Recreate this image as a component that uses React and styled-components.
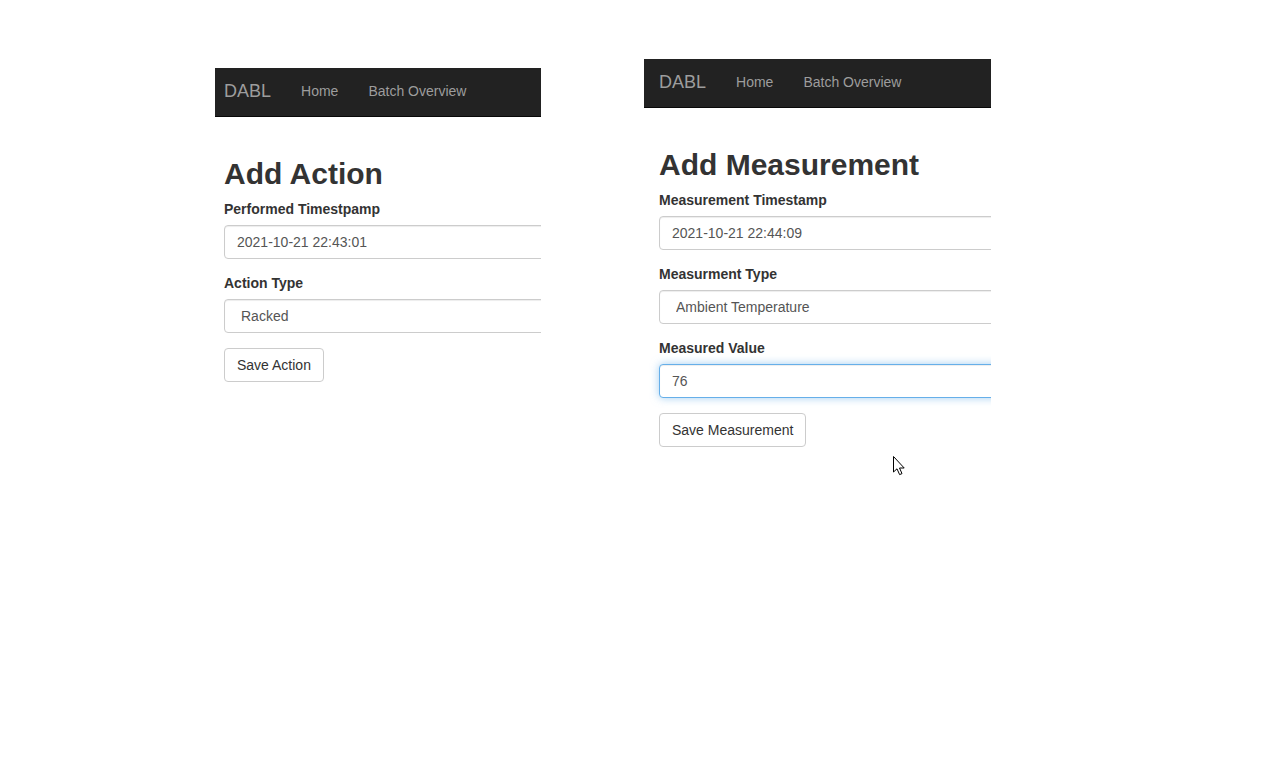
import React from 'react'
import styled, { createGlobalStyle } from 'styled-components'

const GlobalStyle = createGlobalStyle`
  html, body {
    margin: 0;
    padding: 0;
    background: #fff;
  }
  body {
    font-family: "Liberation Sans", Arial, sans-serif;
    font-size: 14px;
    line-height: 1.42857;
    color: #333;
  }
  * {
    box-sizing: border-box;
  }
`

const Canvas = styled.div`
  position: relative;
  width: 1268px;
  height: 770px;
  display: flex;
  align-items: flex-start;
  gap: 103px;
  padding-left: 215px;
  overflow: hidden;
`

const Panel = styled.div`
  width: ${(p) => p.width}px;
  margin-top: ${(p) => p.top}px;
  overflow: hidden;
`

const Navbar = styled.nav`
  height: 49px;
  background: #222;
  border-bottom: 1px solid #080808;
  display: flex;
  align-items: center;
  gap: 30px;
  padding-left: ${(p) => p.inset}px;
  white-space: nowrap;
`

const Brand = styled.a`
  font-size: 18px;
  color: #9d9d9d;
  text-decoration: none;
`

const NavLink = styled.a`
  font-size: 14px;
  color: #9d9d9d;
  text-decoration: none;
`

const Content = styled.div`
  padding-top: 20px;
  padding-left: ${(p) => p.inset}px;
`

const Form = styled.form`
  width: 420px;
`

const Title = styled.h1`
  font-size: 30px;
  font-weight: 700;
  line-height: 1.1;
  margin: 20px 0 10px;
  color: #333;
`

const Group = styled.div`
  margin-bottom: 15px;
`

const Label = styled.label`
  display: block;
  font-weight: 700;
  margin-bottom: 5px;
  color: #333;
`

const Input = styled.input`
  display: block;
  width: 100%;
  height: 34px;
  padding: 6px 12px;
  font-family: inherit;
  font-size: 14px;
  color: #555;
  background: #fff;
  border: 1px solid ${(p) => (p.focused ? '#66afe9' : '#ccc')};
  border-radius: 4px;
  outline: none;
  box-shadow: inset 0 1px 1px rgba(0, 0, 0, 0.075)
    ${(p) => (p.focused ? ', 0 0 8px rgba(102, 175, 233, 0.6)' : '')};
`

const Select = styled.select`
  display: block;
  width: 100%;
  height: 34px;
  padding: 6px 12px 6px 16px;
  font-family: inherit;
  font-size: 14px;
  color: #555;
  background: #fff;
  border: 1px solid #ccc;
  border-radius: 4px;
  appearance: none;
  outline: none;
  box-shadow: inset 0 1px 1px rgba(0, 0, 0, 0.075);
`

const Button = styled.button`
  height: 34px;
  padding: 6px 12px;
  font-family: inherit;
  font-size: 14px;
  color: #333;
  background: #fff;
  border: 1px solid #ccc;
  border-radius: 4px;
  cursor: pointer;
`

const Pointer = styled.svg`
  position: absolute;
  left: 893px;
  top: 456px;
`

const Nav = ({ inset }) => (
  <Navbar inset={inset}>
    <Brand href="#">DABL</Brand>
    <NavLink href="#">Home</NavLink>
    <NavLink href="#">Batch Overview</NavLink>
  </Navbar>
)

const App = () => {
  return (
    <>
      <GlobalStyle />
      <Canvas>
        <Panel width={326} top={68}>
          <Nav inset={9} />
          <Content inset={9}>
            <Form onSubmit={(e) => e.preventDefault()}>
              <Title>Add Action</Title>
              <Group>
                <Label>Performed Timestpamp</Label>
                <Input defaultValue="2021-10-21 22:43:01" />
              </Group>
              <Group>
                <Label>Action Type</Label>
                <Select defaultValue="Racked">
                  <option>Racked</option>
                </Select>
              </Group>
              <Button type="button">Save Action</Button>
            </Form>
          </Content>
        </Panel>

        <Panel width={347} top={59}>
          <Nav inset={15} />
          <Content inset={15}>
            <Form onSubmit={(e) => e.preventDefault()}>
              <Title>Add Measurement</Title>
              <Group>
                <Label>Measurement Timestamp</Label>
                <Input defaultValue="2021-10-21 22:44:09" />
              </Group>
              <Group>
                <Label>Measurment Type</Label>
                <Select defaultValue="Ambient Temperature">
                  <option>Ambient Temperature</option>
                </Select>
              </Group>
              <Group>
                <Label>Measured Value</Label>
                <Input focused defaultValue="76" />
              </Group>
              <Button type="button">Save Measurement</Button>
            </Form>
          </Content>
        </Panel>

        <Pointer width="13" height="20" viewBox="0 0 13 20">
          <path
            d="M0.5 0.5 L0.5 16 L4 12.8 L6.6 18.6 L9 17.6 L6.5 12 L11.2 12 Z"
            fill="#fff"
            stroke="#000"
            strokeWidth="1"
            strokeLinejoin="miter"
          />
        </Pointer>
      </Canvas>
    </>
  )
}

export default App
